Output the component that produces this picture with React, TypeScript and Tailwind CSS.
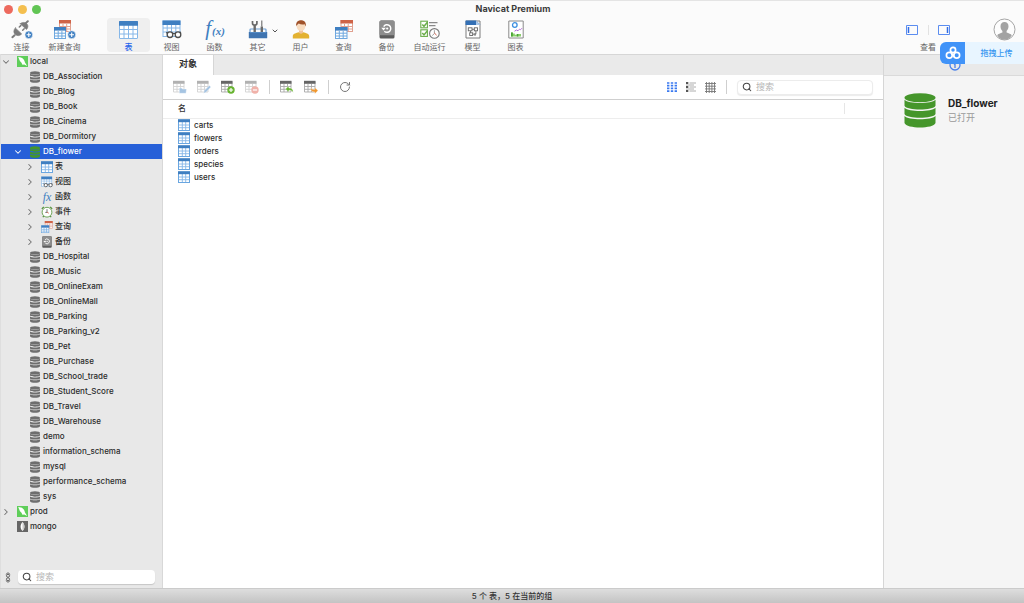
import React, { useState } from 'react';
import { ChevronDown, ChevronRight, RotateCw, Search } from 'lucide-react';

type IconProps = { className?: string };

const TableIcon = ({ className, head = '#3f7fc1', line = '#86b7e8' }: IconProps & { head?: string; line?: string }) => (
  <svg viewBox="0 0 19 18" className={className} aria-hidden="true">
    <rect x="0.5" y="1" width="18" height="16.5" rx="0.5" fill="#fff" stroke={line} />
    <path d="M5 4v13M9.500 4v13M14 4v13M1 8.500h17M1 13h17" stroke={line} fill="none" />
    <rect width="19" height="4.800" rx="0.5" fill={head} />
  </svg>
);

const SmallTableIcon = ({ className }: IconProps) => (
  <svg viewBox="0 0 12 12" className={className} aria-hidden="true">
    <rect x="0.5" y="1" width="11" height="10.500" fill="#fff" stroke="#6aa6e0" />
    <path d="M4.300 3v8M7.700 3v8M1 6h10M1 8.700h10" stroke="#86b7e8" strokeWidth="0.900" />
    <rect y="0.300" width="12" height="2.900" fill="#3f7fc1" />
  </svg>
);

const ViewIcon = ({ className }: IconProps) => (
  <svg viewBox="0 0 20 19" className={className} aria-hidden="true">
    <rect x="1" y="1" width="17" height="15.500" fill="#fff" stroke="#86b7e8" />
    <path d="M5.200 4v12M9.500 4v12M13.800 4v12M1 8h17M1 12h17" stroke="#86b7e8" />
    <rect x="0.5" y="0.5" width="18" height="4.500" fill="#3f7fc1" />
    <g fill="#fff" stroke="#4d4d4d" strokeWidth="1.300">
      <circle cx="8" cy="14.700" r="2.800" />
      <circle cx="16" cy="14.700" r="2.800" />
      <path d="M10.800 13.800q1.200-.8 2.400 0M5.300 13.500l-.8-1.500M18.700 13.500l-.5-1.700" fill="none" />
    </g>
  </svg>
);

const QueryIcon = ({ className }: IconProps) => (
  <svg viewBox="0 0 18 19" className={className} aria-hidden="true">
    <rect x="6" y="0.5" width="11.5" height="11" fill="#fff" stroke="#e0a08f" />
    <path d="M9.5 4v8M13.2 4v8M6 6.5h11.5M6 9h11.5" stroke="#e0a08f" />
    <rect x="5.5" width="12.5" height="3.5" fill="#cf6347" />
    <rect x="0.5" y="7.5" width="11.5" height="11" fill="#fff" stroke="#6fa8df" />
    <path d="M4.3 11v7M8.2 11v7M1 13.2h11M1 16h11" stroke="#6fa8df" />
    <rect y="7" width="12.5" height="3.6" fill="#3f7fc1" />
  </svg>
);

const NewQueryIcon = ({ className }: IconProps) => (
  <svg viewBox="0 0 22 19" className={className} aria-hidden="true">
    <rect x="5.5" y="0.5" width="11" height="11" fill="#fff" stroke="#e0a08f" />
    <path d="M9 4v8M12.7 4v8M6 6.5h11M6 9h11" stroke="#e0a08f" />
    <rect x="5" width="12" height="3.5" fill="#cf6347" />
    <rect x="0.5" y="7.5" width="11" height="11" fill="#fff" stroke="#6fa8df" />
    <path d="M4.2 11v7M7.9 11v7M1 13.2h11M1 16h11" stroke="#6fa8df" />
    <rect y="7" width="12" height="3.6" fill="#3f7fc1" />
    <circle cx="17.7" cy="14.7" r="4" fill="#3f7fc1" stroke="#fff" strokeWidth="0.6" />
    <path d="M15.4 14.7H20M17.7 12.4V17" stroke="#fff" strokeWidth="1.1" />
  </svg>
);

const ConnectIcon = ({ className }: IconProps) => (
  <svg viewBox="0 0 22 19" className={className} aria-hidden="true">
    <g fill="#7b7b7b" stroke="#7b7b7b" strokeLinecap="round">
      <path d="M16.8 1.200l-2 1.900" strokeWidth="2" />
      <path d="M9.200 3.700l6.300 5.800c1.600-1.600 2-4 .4-5.700-1.700-1.800-4.700-1.900-6.700-.1z" strokeWidth="0.600" />
      <path d="M9.800 5.600L8.300 7M13.200 8.800l-1.500 1.500" strokeWidth="1.500" />
      <path d="M4.300 7.900l6.400 6c-1.800 2-4.600 2.300-6.400.7-2-1.800-1.900-4.700 0-6.700z" strokeWidth="0.600" />
      <path d="M3.600 15.200L1.400 17.200" strokeWidth="2" />
    </g>
    <circle cx="17.8" cy="14.8" r="3.9" fill="#3f7fc1" stroke="#fff" strokeWidth="0.6" />
    <path d="M15.600 14.800H20M17.800 12.600V17" stroke="#fff" strokeWidth="1.100" />
  </svg>
);

// Serif italic letters drawn as text, so the glyphs need a little room around them
const FunctionIcon = () => (
  <span className="flex items-baseline font-['Liberation_Serif',serif] leading-[22px] text-[#3f7fc1] italic" aria-hidden="true">
    <span className="px-px text-[21px]">f</span>
    <span className="text-[11px] font-bold">(x)</span>
  </span>
);

const FxIcon = () => (
  <span className="flex w-3 items-baseline justify-center font-['Liberation_Serif',serif] text-[12px] leading-[14px] text-[#3f7fc1] italic" aria-hidden="true">
    fx
  </span>
);

const ToolsIcon = ({ className }: IconProps) => (
  <svg viewBox="0 0 20 19" className={className} aria-hidden="true">
    <path d="M2 13V9.800q0-.8.8-.8h14.400q.8 0 .8.8V13" fill="none" stroke="#6c9fd6" strokeWidth="1.200" />
    <path d="M6.700 5v8" stroke="#6a6a6a" strokeWidth="2.400" />
    <path d="M4.500.9v2.300q0 1.800 2.200 1.800t2.200-1.800V.9" fill="none" stroke="#6a6a6a" strokeWidth="1.700" />
    <path d="M13.800.6v6" stroke="#6a6a6a" strokeWidth="1.100" />
    <path d="M13.800 6.500V13" stroke="#6a6a6a" strokeWidth="2.400" />
    <rect x="0.8" y="12" width="18.400" height="6.300" rx="0.6" fill="#3f74b0" />
    <path d="M2 12.500h16" stroke="#5b92cc" strokeWidth="0.800" />
  </svg>
);

const UserIcon = ({ className }: IconProps) => (
  <svg viewBox="0 0 18 19" className={className} aria-hidden="true">
    <path d="M.8 18.500v-2.300c0-2.500 3.500-3.200 6-3.900h4.400c2.500.7 6 1.400 6 3.900v2.300z" fill="#e3b232" />
    <path d="M7 9.500h4v3.200q-2 2-4 0z" fill="#efc39b" />
    <ellipse cx="9" cy="6.300" rx="4.300" ry="5" fill="#f8dcc0" />
    <path d="M4.200 6.200C3.600 2.200 6 .2 9 .2s5.500 2 4.800 6c-.7-.3-.7-1.400-1-2-2.300.6-4.500.2-6-.6-1.200.7-1.700 1.500-2.600 2.600z" fill="#a0522a" />
  </svg>
);

const BackupIcon = ({ className }: IconProps) => (
  <svg viewBox="0 0 16 19" className={className} aria-hidden="true">
    <rect x="0.5" y="0.5" width="15" height="18" rx="1.600" fill="#5c5c5c" />
    <rect x="0.5" y="0.5" width="15" height="14.800" rx="1.500" fill="#8d8d8d" />
    <path d="M4.700 6.600a3.800 3.800 0 1 1 .6 4.600" fill="none" stroke="#fff" strokeWidth="1.400" />
    <path d="M2.300 7.800h4.600L4.500 10.400z" fill="#fff" />
    <circle cx="8.200" cy="8.500" r="1.100" fill="#fff" />
  </svg>
);

const AutoRunIcon = ({ className }: IconProps) => (
  <svg viewBox="0 0 20 19" className={className} aria-hidden="true">
    <g fill="#fff" stroke="#6aad4a" strokeWidth="1.100">
      <rect x="0.800" y="1.200" width="6.600" height="6.600" />
      <rect x="0.800" y="9.800" width="6.600" height="6.600" />
      <path d="M2.300 4.400l1.700 1.900L7.400 2.200M2.300 13L4 14.900l3.400-4.100" fill="none" strokeWidth="1.500" />
    </g>
    <path d="M9 2.600h8.500M9 5.600h6.500" stroke="#8a8a8a" strokeWidth="1.200" />
    <circle cx="14.400" cy="13.400" r="4.800" fill="#fff" stroke="#7a7a7a" strokeWidth="1.100" />
    <path d="M14.400 10.200v3.400l-2.200 2" fill="none" stroke="#999" strokeWidth="0.900" />
    <path d="M14.400 13l2.200 2.200" stroke="#d65b43" />
  </svg>
);

const ModelIcon = ({ className }: IconProps) => (
  <svg viewBox="0 0 16 19" className={className} aria-hidden="true">
    <path d="M1 1h14v17H1z" fill="#fff" stroke="#7d7d7d" />
    <path d="M.5.500H11L15.500 5H.5z" fill="#3470b5" />
    <path d="M11 .5L15.500 5H11z" fill="#a9c7e8" />
    <g fill="none" stroke="#666" strokeWidth="0.900">
      <rect x="3.300" y="7.800" width="3.700" height="3" />
      <rect x="9.300" y="7.800" width="3.200" height="3" />
      <rect x="4.700" y="12.800" width="3" height="2.700" />
      <path d="M7 9.300h2.300M10.900 10.800v3.400H7.700M5.500 10.800v2M10 13v3" />
    </g>
  </svg>
);

const ChartIcon = ({ className }: IconProps) => (
  <svg viewBox="0 0 16 19" className={className} aria-hidden="true">
    <path d="M.8 1h14.400v17H.8z" fill="#fff" stroke="#8a8a8a" />
    <circle cx="6.800" cy="5" r="2.300" fill="none" stroke="#3c8fe0" strokeWidth="1.300" />
    <path d="M6.500 11.200l2-1.200 1.500.8 1.500-1.600 1 .5 1.500-1.500" fill="none" stroke="#b268d6" />
    <path d="M3 16.500v-4h1.800v1h2v1.200h2v-.8h4.200v2.600z" fill="#8ccf6e" />
    <path d="M3 12.500h1.800v4H3zM8.800 14h1.500v2.500H8.800z" fill="#4ba336" />
  </svg>
);

const DatabaseIcon = ({ className, color = '#666' }: IconProps & { color?: string }) => (
  <svg viewBox="0 0 32 35" className={className} aria-hidden="true">
    <g fill={color}>
      <ellipse cx="16" cy="4.700" rx="15.500" ry="4.500" />
      <path d="M.5 6.700c4 4.400 27 4.400 31 0v6c-2 5-29 5-31 0z" />
      <path d="M.5 14.800c4 4.400 27 4.400 31 0v6.200c-2 5-29 5-31 0z" />
      <path d="M.5 23c4 4.400 27 4.400 31 0v7c-2 6-29 6-31 0z" />
    </g>
  </svg>
);

const SmallDatabaseIcon = ({ color = '#6e6e6e' }: { color?: string }) => (
  <svg viewBox="0 0 12 12" className="h-3 w-3" aria-hidden="true">
    <g fill={color}>
      <ellipse cx="6" cy="1.900" rx="5" ry="1.700" />
      <path d="M1 2.700c1.500 1.400 8.500 1.400 10 0v1.900c-1 1.600-9 1.600-10 0z" />
      <path d="M1 5.400c1.500 1.400 8.500 1.400 10 0v2c-1 1.600-9 1.600-10 0z" />
      <path d="M1 8.200c1.500 1.400 8.500 1.400 10 0v2c-1 2-9 2-10 0z" />
    </g>
  </svg>
);

const MysqlIcon = ({ className }: IconProps) => (
  <svg viewBox="0 0 12 12" className={className} aria-hidden="true">
    <rect width="12" height="12" fill="#5fce5a" />
    <path d="M1.300 1.200l3 .3c2.500.6 4 3.300 4.400 5.700l2.400 3.600-3.200-1.500-2 .2-1-2.200C2.800 6 2.500 3.500 1.300 1.200z" fill="#fff" />
  </svg>
);

const MongoIcon = ({ className }: IconProps) => (
  <svg viewBox="0 0 12 12" className={className} aria-hidden="true">
    <rect width="12" height="12" fill="#666" />
    <path d="M6 1C8.800 4 8.800 8 6 11 3.200 8 3.200 4 6 1z" fill="#fff" />
    <path d="M6 1c2.800 3 2.800 7 0 10z" fill="#ccc" />
  </svg>
);

const EventIcon = ({ className }: IconProps) => (
  <svg viewBox="0 0 12 12" className={className} aria-hidden="true">
    <path d="M.8 2.800l2-2M11.200 2.800l-2-2M1.800 11.200l1-1M10.200 11.200l-1-1" stroke="#4d8b35" strokeWidth="1.200" />
    <circle cx="6" cy="6.200" r="4.900" fill="#fff" stroke="#6ea558" strokeWidth="1" />
    <path d="M6 3.200v3.200H4.300" stroke="#555" strokeWidth="0.800" fill="none" />
    <path d="M6 6.200l1.800 1" stroke="#d65b43" strokeWidth="0.800" />
  </svg>
);

type ActionKind = 'open' | 'design' | 'new' | 'delete' | 'import' | 'export';

const ActionIcon = ({ kind, muted }: { kind: ActionKind; muted?: boolean }) => (
  <svg viewBox="0 0 14 14" className="h-[14px] w-[14px]" aria-hidden="true">
    <g opacity={muted ? 0.5 : 1}>
      <path d="M.5 1.500h10.500v10.500H.5zM4 4v8M7.500 4v8M.5 6.500h10.500M.5 9.300h10.500" fill="none" stroke="#a8a8a8" strokeWidth="0.900" />
      <rect y="0.800" width="11.500" height="3" fill="#666" />
    </g>
    {kind === 'open' && <path d="M6.300 8h2.300l.8 1H13.500l-.5 4.300h-6.700z" fill="#a5c4e2" stroke="#fff" strokeWidth="0.400" />}
    {kind === 'design' && <path d="M6.600 13.200l.7-2.600 5-5.100 1.600 1.600-4.900 5.200z" fill="#a5c4e2" stroke="#fff" strokeWidth="0.300" />}
    {kind === 'new' && (
      <g>
        <circle cx="10" cy="10" r="3.700" fill="#67b430" />
        <path d="M7.900 10h4.200M10 7.900v4.200" stroke="#fff" strokeWidth="1.200" />
      </g>
    )}
    {kind === 'delete' && (
      <g>
        <circle cx="10" cy="10" r="3.700" fill="#f0b1a9" />
        <path d="M7.900 10h4.200" stroke="#fff" strokeWidth="1.200" />
      </g>
    )}
    {kind === 'import' && <path d="M5.500 9L8.800 6v2c3 0 4.400 1.300 4.400 4.500-1-1.700-2.200-2.300-4.400-2.300V12z" fill="#67b430" stroke="#fff" strokeWidth="0.300" />}
    {kind === 'export' && <path d="M14 10.600L10.800 7.600v2c-2.200 0-3.400-.4-4-2.200-.5 2.800.8 4.500 4 4.500v1.900z" fill="#f0962c" stroke="#fff" strokeWidth="0.300" />}
  </svg>
);

interface ToolItem {
  label: string;
  icon: React.ReactNode;
  menu?: boolean;
}

const connectionTools: ToolItem[] = [
  { label: '连接', icon: <ConnectIcon className="h-[19px] w-[22px]" /> },
  { label: '新建查询', icon: <NewQueryIcon className="h-[19px] w-[22px]" /> },
];

const objectTools: ToolItem[] = [
  { label: '表', icon: <TableIcon className="h-[18px] w-[19px]" /> },
  { label: '视图', icon: <ViewIcon className="h-[19px] w-5" /> },
  { label: '函数', icon: <FunctionIcon /> },
  { label: '其它', icon: <ToolsIcon className="h-[19px] w-5" />, menu: true },
  { label: '用户', icon: <UserIcon className="h-[19px] w-[18px]" /> },
  { label: '查询', icon: <QueryIcon className="h-[19px] w-[18px]" /> },
  { label: '备份', icon: <BackupIcon className="h-[19px] w-4" /> },
  { label: '自动运行', icon: <AutoRunIcon className="h-[19px] w-5" /> },
  { label: '模型', icon: <ModelIcon className="h-[19px] w-4" /> },
  { label: '图表', icon: <ChartIcon className="h-[19px] w-4" /> },
];

interface TreeNode {
  name: string;
  level: 0 | 1 | 2;
  icon?: React.ReactNode;
  state?: 'open' | 'closed';
}

const db = (name: string): TreeNode => ({ name, level: 1 });

const tree: TreeNode[] = [
  { name: 'local', level: 0, state: 'open', icon: <MysqlIcon className="h-[11px] w-[11px]" /> },
  ...['DB_Association', 'Db_Blog', 'DB_Book', 'DB_Cinema', 'DB_Dormitory'].map(db),
  { name: 'DB_flower', level: 1, state: 'open', icon: <SmallDatabaseIcon color="#45962b" /> },
  { name: '表', level: 2, state: 'closed', icon: <SmallTableIcon className="h-3 w-3" /> },
  { name: '视图', level: 2, state: 'closed', icon: <ViewIcon className="h-3 w-3" /> },
  { name: '函数', level: 2, state: 'closed', icon: <FxIcon /> },
  { name: '事件', level: 2, state: 'closed', icon: <EventIcon className="h-3 w-3" /> },
  { name: '查询', level: 2, state: 'closed', icon: <QueryIcon className="h-3 w-3" /> },
  { name: '备份', level: 2, state: 'closed', icon: <BackupIcon className="h-3 w-3" /> },
  ...[
    'DB_Hospital', 'DB_Music', 'DB_OnlineExam', 'DB_OnlineMall', 'DB_Parking', 'DB_Parking_v2',
    'DB_Pet', 'DB_Purchase', 'DB_School_trade', 'DB_Student_Score', 'DB_Travel', 'DB_Warehouse',
    'demo', 'information_schema', 'mysql', 'performance_schema', 'sys',
  ].map(db),
  { name: 'prod', level: 0, state: 'closed', icon: <MysqlIcon className="h-[11px] w-[11px]" /> },
  { name: 'mongo', level: 0, icon: <MongoIcon className="h-[11px] w-[11px]" /> },
];

const indent = ['pl-0', 'pl-3', 'pl-6'];

const tables = ['carts', 'flowers', 'orders', 'species', 'users'];

const ToolButton = ({ item, active, onClick }: { item: ToolItem; active?: boolean; onClick?: () => void }) => (
  <button
    type="button"
    onClick={onClick}
    className={`relative flex h-[34px] w-[43px] flex-col items-center justify-between rounded text-[8px] leading-[10px] whitespace-nowrap ${
      active ? 'bg-[#efefef] font-medium text-[#2563eb]' : 'text-[#666]'
    }`}
  >
    <span className="flex h-[23px] items-center">{item.icon}</span>
    {item.label}
    {item.menu && <ChevronDown className="absolute top-[9px] right-0 h-2 w-2 text-[#555]" strokeWidth={3} />}
  </button>
);

const Header = () => {
  const [active, setActive] = useState('表');

  return (
    <header className="relative h-[54px] shrink-0 bg-[#fbfbfb] shadow-[inset_0_1px_0_#e4e4e4]">
      <div className="relative flex h-[18px] items-center justify-center pl-[2px]">
        <div className="absolute left-1 flex gap-[5px]">
          <button type="button" aria-label="关闭" className="h-[9px] w-[9px] rounded-full bg-[#ed6a5e]" />
          <button type="button" aria-label="最小化" className="h-[9px] w-[9px] rounded-full bg-[#f4bf4f]" />
          <button type="button" aria-label="缩放" className="h-[9px] w-[9px] rounded-full bg-[#61c554]" />
        </div>
        <h1 className="text-[9px] leading-3 font-bold text-[#3c3c3c]">Navicat Premium</h1>
      </div>

      <div className="flex items-start">
        {connectionTools.map((item) => (
          <ToolButton key={item.label} item={item} />
        ))}
        <div className="ml-[21px] flex">
          {objectTools.map((item) => (
            <ToolButton key={item.label} item={item} active={active === item.label} onClick={() => setActive(item.label)} />
          ))}
        </div>

        <div className="mr-[43px] ml-auto flex h-[34px] w-[44px] flex-col items-center justify-between">
          <div className="flex h-[23px] w-full items-center justify-between">
            <button type="button" aria-label="左侧面板">
              <svg viewBox="0 0 12 10" className="h-[10px] w-3">
                <path d="M.5.500h11v9H.5z" fill="none" stroke="#5b8df0" />
                <path d="M2.500 2v6" stroke="#2f6be6" strokeWidth="1.500" />
              </svg>
            </button>
            <span className="h-[10px] w-px bg-[#e2e2e2]" />
            <button type="button" aria-label="右侧面板">
              <svg viewBox="0 0 12 10" className="h-[10px] w-3">
                <path d="M.5.500h11v9H.5z" fill="none" stroke="#5b8df0" />
                <path d="M9.500 2v6" stroke="#2f6be6" strokeWidth="1.500" />
              </svg>
            </button>
          </div>
          <span className="text-center text-[8px] leading-[10px] text-[#666]">查看</span>
        </div>

        <button type="button" aria-label="用户" className="mr-2 h-[23px] w-[23px]">
          <svg viewBox="0 0 23 23" className="h-[23px] w-[23px]">
            <circle cx="11.500" cy="11.500" r="10.500" fill="#fdfdfd" stroke="#a6a6a6" />
            <path d="M11.500 4c2.600 0 4 1.700 4 4.300 0 2-.8 3.600-1.900 4.600v1.600c1.900.9 4.300 1.300 5.200 2.700-1.700 3-4.400 4.600-7.300 4.600s-5.700-1.700-7.300-4.600c.9-1.400 3.300-1.800 5.200-2.700v-1.600c-1.200-1-1.900-2.600-1.900-4.600C7.500 5.700 9 4 11.500 4z" fill="#a3a3a3" />
          </svg>
        </button>
      </div>

      {/* floating upload badge */}
      <button type="button" className="absolute top-[42px] right-0 z-10 flex h-[22px] w-[84px] items-center rounded-l-md bg-[#e8f5ff] text-[8px] font-medium text-[#3795f0]">
        <span className="flex h-[22px] w-[25px] items-center justify-center rounded-l-md bg-[#4093f8]">
          <svg viewBox="0 0 16 14" className="h-[14px] w-4" fill="none" stroke="#fff" strokeWidth="1.700" aria-hidden="true">
            <circle cx="8" cy="3.900" r="2.600" />
            <circle cx="4.300" cy="9.300" r="2.900" />
            <circle cx="11.700" cy="9.300" r="2.900" />
            <path d="M6.500 7.500l3 3.500" />
          </svg>
        </span>
        <span className="flex-1 pl-1 text-center">拖拽上传</span>
      </button>
    </header>
  );
};

const Sidebar = () => {
  const [selected, setSelected] = useState('DB_flower');

  return (
    <aside className="flex w-[163px] shrink-0 flex-col border-r border-l border-r-[#d8d8d8] border-l-[#dedede] bg-[#e8e8e8] shadow-[inset_0_1px_0_#d6d6d6]">
      <ul className="min-h-0 flex-1 overflow-hidden">
        {tree.map((node) => {
          const isSelected = node.name === selected;
          const Chevron = node.state === 'open' ? ChevronDown : ChevronRight;
          return (
            <li key={`${node.level}-${node.name}`}>
              <button
                type="button"
                onClick={() => setSelected(node.name)}
                className={`flex h-[15px] w-full items-center text-[8px] leading-[15px] font-medium ${indent[node.level]} ${
                  isSelected ? 'bg-[#2760d8] text-white' : 'text-[#2b2b2b]'
                }`}
              >
                <span className="flex w-4 shrink-0 items-center">
                  {node.state && <Chevron className={`h-[10px] w-[10px] ${isSelected ? 'text-white' : 'text-[#707070]'}`} strokeWidth={2.5} />}
                </span>
                <span className="mr-[2px] flex shrink-0 items-center">
                  {node.icon ?? <SmallDatabaseIcon />}
                </span>
                {node.name}
              </button>
            </li>
          );
        })}
      </ul>

      <div className="flex h-[22px] shrink-0 items-center pr-[7px] pl-1">
        <button type="button" aria-label="筛选" className="mr-[7px]">
          <svg viewBox="0 0 6 11" className="h-[11px] w-[6px]" fill="none" stroke="#666" aria-hidden="true">
            <path d="M.8 2.500L3 .7l2.200 1.800M.8 8.500L3 10.300l2.200-1.800" />
            <circle cx="3" cy="3.800" r="1.500" />
            <circle cx="3" cy="7.200" r="1.500" />
          </svg>
        </button>
        <label className="flex h-[14px] flex-1 items-center gap-1 rounded bg-white px-1 shadow-[0_1px_1px_rgba(0,0,0,0.15)]">
          <Search className="h-[10px] w-[10px] shrink-0 text-[#444]" strokeWidth={2.5} />
          <input type="search" aria-label="搜索对象树" placeholder="搜索" className="w-full min-w-0 text-[9px] leading-3 outline-none placeholder:text-[#b5b5b5]" />
        </label>
      </div>
    </aside>
  );
};

const Divider = () => <span className="h-[14px] w-px bg-[#cfcfcf]" />;

const ObjectToolbar = () => (
  <div className="flex h-[25px] shrink-0 items-center border-b border-[#cfcfcf] px-[10px]">
    <div className="flex items-center gap-[10px]">
      <button type="button" aria-label="打开表" disabled><ActionIcon kind="open" muted /></button>
      <button type="button" aria-label="设计表" disabled><ActionIcon kind="design" muted /></button>
      <button type="button" aria-label="新建表"><ActionIcon kind="new" /></button>
      <button type="button" aria-label="删除表" disabled><ActionIcon kind="delete" muted /></button>
      <Divider />
      <button type="button" aria-label="导入向导"><ActionIcon kind="import" /></button>
      <button type="button" aria-label="导出向导"><ActionIcon kind="export" /></button>
      <Divider />
      <button type="button" aria-label="刷新">
        <RotateCw className="h-3 w-3 text-[#777]" strokeWidth={2} />
      </button>
    </div>

    <div className="ml-auto flex items-center gap-[9px]">
      <button type="button" aria-label="图标">
        <svg viewBox="0 0 10 10" className="h-[10px] w-[10px]" fill="none" stroke="#3b7af0" strokeWidth="1.700" aria-hidden="true">
          <path d="M0 1h10M0 3.700h10M0 6.400h10M0 9.100h10" strokeDasharray="2.400 1.400" />
        </svg>
      </button>
      <button type="button" aria-label="列表">
        <svg viewBox="0 0 10 10" className="h-[10px] w-[10px]" aria-hidden="true">
          <path d="M0 1h2.300M0 5h2.300M0 9h2.300" stroke="#555" strokeWidth="1.800" />
          <path d="M3.500 1H10M3.500 5H10M3.500 9H10M0 3h8M0 7h8" stroke="#999" strokeWidth="0.800" />
        </svg>
      </button>
      <button type="button" aria-label="详细信息">
        <svg viewBox="0 0 11 11" className="h-[11px] w-[11px]" stroke="#777" strokeWidth="0.900" aria-hidden="true">
          <path d="M1.500 0v11M4.200 0v11M6.900 0v11M9.500 0v11M0 1.500h11M0 4.200h11M0 6.900h11M0 9.500h11" />
        </svg>
      </button>
      <span className="ml-px flex items-center gap-[10px]">
        <Divider />
        <label className="flex h-[15px] w-[136px] items-center gap-1 rounded border border-[#ececec] bg-white px-1 shadow-[0_1px_1px_rgba(0,0,0,0.08)]">
          <Search className="h-[10px] w-[10px] shrink-0 text-[#444]" strokeWidth={2.5} />
          <input type="search" aria-label="搜索表" placeholder="搜索" className="w-full min-w-0 text-[9px] leading-3 outline-none placeholder:text-[#b5b5b5]" />
        </label>
      </span>
    </div>
  </div>
);

const ObjectList = () => (
  <main className="flex min-w-0 flex-1 flex-col border-t border-[#d6d6d6] bg-white">
    <div className="flex h-5 shrink-0 bg-[#eaeaea]">
      <button type="button" className="w-[51px] border-r border-[#d6d6d6] bg-white pb-[2px] text-[9px] leading-[18px] font-bold text-[#333]">对象</button>
    </div>
    <ObjectToolbar />
    <table className="w-full border-collapse text-left text-[8px]">
      <thead>
        <tr className="h-[18px] border-b border-[#ededed]">
          <th className="py-0 pl-[15px] leading-[17px] font-medium text-[#333]">名</th>
          <th className="w-[39px] p-0">
            <span className="block h-[11px] w-px bg-[#e6e6e6]" />
          </th>
        </tr>
      </thead>
      <tbody>
        {tables.map((name) => (
          <tr key={name} className="h-[13px]">
            <td colSpan={2} className="p-0 pl-[15px] leading-[13px] font-medium text-[#2b2b2b]">
              <span className="flex items-center gap-1">
                <SmallTableIcon className="h-3 w-3" />
                {name}
              </span>
            </td>
          </tr>
        ))}
      </tbody>
    </table>
  </main>
);

const InfoPanel = () => (
  <section className="w-[141px] shrink-0 border-t border-l border-[#d6d6d6] bg-[#f5f5f5]">
    <div className="flex h-[21px] items-center justify-center border-b border-[#dadada] bg-[#e9e9e9] pl-[2px]">
      <button type="button" aria-label="信息">
        <svg viewBox="0 0 12 12" className="h-3 w-3" fill="none" stroke="#4a80ea" aria-hidden="true">
          <circle cx="6" cy="6" r="5" strokeWidth="1.300" />
          <path d="M6 5v4M4.800 5H6" strokeWidth="1.300" />
        </svg>
      </button>
    </div>
    <div className="flex items-center gap-3 pt-[17px] pl-5">
      <DatabaseIcon className="h-[35px] w-8" color="#45962b" />
      <div className="pb-px">
        <h2 className="text-[10px] leading-[14px] font-bold text-[#222]">DB_flower</h2>
        <p className="mt-px text-[9px] leading-[14px] text-[#999]">已打开</p>
      </div>
    </div>
  </section>
);

const App: React.FC = () => {
  return (
    <div className="flex h-screen flex-col overflow-hidden bg-white font-['Inter','Noto_Sans_CJK_SC',sans-serif]">
      <Header />
      <div className="flex min-h-0 flex-1">
        <Sidebar />
        <ObjectList />
        <InfoPanel />
      </div>
      <footer className="flex h-[15px] shrink-0 items-center justify-center border-t border-[#cbcbcb] bg-linear-to-b from-[#dedede] to-[#c3c3c3] text-[8px] leading-3 font-medium text-[#333]">
        5 个 表，5 在当前的组
      </footer>
    </div>
  );
};

export default App;
